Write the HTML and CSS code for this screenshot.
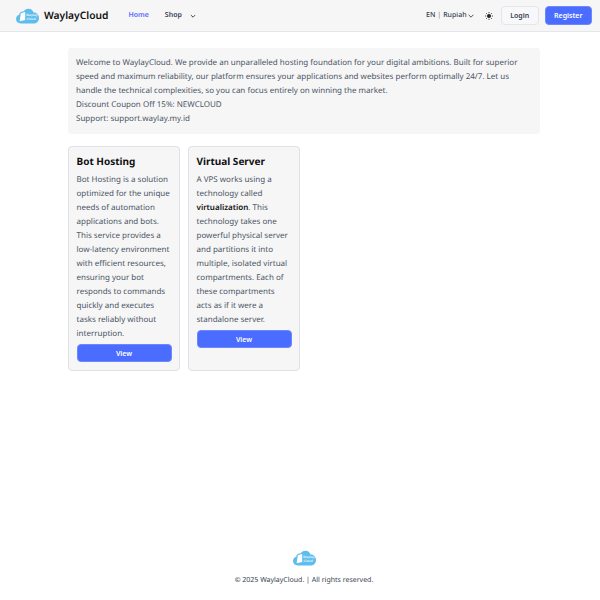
FILE: index.html
```html
<!DOCTYPE html>
<html lang="en">
<head>
<title>WaylayCloud</title>
<link rel="stylesheet" href="styles.css">
</head>
<body>
<header class="topbar">
    <div class="topbar-left">
        <a class="brand" href="#">
            <svg class="cloud" viewBox="0 0 24 16" width="23" height="16">
                <path fill="#5fbdee" d="M5 15.800C2 15.800 0 13.800 0 11.200 0 8.900 1.500 7.200 3.300 6.800 3.400 4.500 5.400 3 7.700 3.400 9 1.200 11.200.2 13.400.4c2.300.2 4.100 1.600 4.800 3.700C21.400 4.400 24 6.800 24 10c0 3.300-2.500 5.800-5.800 5.800z"/>
                <path fill="#fff" d="M5 5.200 9.600 3.800v8.500L3.800 13.600z"/>
                <text class="logo-text" x="10.400" y="8.200">Waylay</text>
                <text class="logo-text" x="10.900" y="12">Cloud</text>
            </svg>
            <span class="brand-name">WaylayCloud</span>
        </a>
        <nav class="nav">
            <a class="nav-link active" href="#">Home</a>
            <a class="nav-link" href="#">Shop</a>
            <svg class="chev" viewBox="0 0 10 10" width="6" height="6"><path d="M1.500 3.500 5 7l3.500-3.500" fill="none" stroke="#333" stroke-width="1.500"/></svg>
        </nav>
    </div>
    <div class="topbar-right">
        <div class="locale">
            <span>EN</span><span class="sep">|</span><span>Rupiah</span>
            <svg class="chev-small" viewBox="0 0 10 10" width="6" height="6"><path d="M1 3 5 7l4-4" fill="none" stroke="#333" stroke-width="1.400"/></svg>
        </div>
        <svg class="sun" viewBox="0 0 16 16" width="8" height="8">
            <circle cx="8" cy="8" r="4" fill="#222"/>
            <path d="M8 0v2.500M8 13.500V16M0 8h2.500M13.500 8H16M2.300 2.300 4 4M12 12l1.700 1.700M2.300 13.700 4 12M12 4l1.700-1.700" stroke="#222" stroke-width="1.500"/>
        </svg>
        <button class="btn btn-outline">Login</button>
        <button class="btn btn-primary">Register</button>
    </div>
</header>

<main class="content">
    <section class="intro">
        <p>Welcome to WaylayCloud. We provide an unparalleled hosting foundation for your digital ambitions. Built for superior speed and maximum reliability, our platform ensures your applications and websites perform optimally 24/7. Let us handle the technical complexities, so you can focus entirely on winning the market.</p>
        <p>Discount Coupon Off 15%: NEWCLOUD</p>
        <p>Support: support.waylay.my.id</p>
    </section>

    <section class="cards">
        <div class="card">
            <h2>Bot Hosting</h2>
            <p>Bot Hosting is a solution optimized for the unique needs of automation applications and bots. This service provides a low-latency environment with efficient resources, ensuring your bot responds to commands quickly and executes tasks reliably without interruption.</p>
            <button class="btn btn-primary btn-block">View</button>
        </div>
        <div class="card">
            <h2>Virtual Server</h2>
            <p>A VPS works using a technology called <strong>virtualization</strong>. This technology takes one powerful physical server and partitions it into multiple, isolated virtual compartments. Each of these compartments acts as if it were a standalone server.</p>
            <button class="btn btn-primary btn-block">View</button>
        </div>
    </section>
</main>

<footer class="footer">
    <svg class="cloud" viewBox="0 0 24 16" width="23" height="16">
        <path fill="#5fbdee" d="M5 15.800C2 15.800 0 13.800 0 11.200 0 8.900 1.500 7.200 3.300 6.800 3.400 4.500 5.400 3 7.700 3.400 9 1.200 11.200.2 13.400.4c2.300.2 4.100 1.600 4.800 3.700C21.400 4.400 24 6.800 24 10c0 3.300-2.500 5.800-5.800 5.800z"/>
        <path fill="#fff" d="M5 5.200 9.600 3.800v8.500L3.800 13.600z"/>
        <text class="logo-text" x="10.400" y="8.200">Waylay</text>
        <text class="logo-text" x="10.900" y="12">Cloud</text>
    </svg>
    <p>© 2025 WaylayCloud. | All rights reserved.</p>
</footer>
</body>
</html>
```

FILE: styles.css
```css
* {
    box-sizing: border-box;
}

body {
    font-family: "Noto Sans", sans-serif;
    font-size: 8px;
    line-height: 14px;
    color: #4b5563;
    background-color: #fff;
    margin: 0;
    height: 600px;
    display: flex;
    flex-direction: column;
    text-rendering: geometricPrecision;
}

.topbar {
    height: 32px;
    flex: none;
    display: flex;
    align-items: center;
    justify-content: space-between;
    padding: 0 8px 0 16px;
    background-color: #f6f6f7;
    border-bottom: 1px solid #e5e6ec;
}

.topbar-left, .topbar-right, .nav, .brand, .locale {
    display: flex;
    align-items: center;
}

.brand {
    gap: 5px;
    text-decoration: none;
}

.brand-name {
    font-size: 10.250px;
    font-weight: 600;
    color: #111;
}

.logo-text {
    font-size: 3.400px;
    font-weight: 700;
    fill: #dff3fc;
}

.nav {
    margin-left: 20px;
}

.nav-link {
    font-size: 7px;
    font-weight: 600;
    text-decoration: none;
    color: #374151;
    margin-right: 8px;
}

.nav-link.active {
    color: #5a6cff;
    margin-right: 16px;
}

.locale {
    font-size: 7px;
    font-weight: 500;
    color: #374151;
}

.sep {
    margin: 0 2px;
    color: #888;
}

.chev-small {
    margin-left: 1px;
}

.sun {
    margin: 0 8px 0 11px;
}

.btn {
    font-family: inherit;
    font-size: 7px;
    font-weight: 600;
    height: 19px;
    padding: 0 8.500px;
    border-radius: 4px;
    cursor: pointer;
}

.btn-outline {
    background-color: #f8f8fa;
    border: 1px solid #e5e6ec;
    color: #374151;
    margin-right: 6px;
}

.btn-primary {
    background-color: #4a6cff;
    border: 1px solid #6d87ff;
    color: #fff;
}

.btn-block {
    display: block;
    width: 100%;
    height: 18px;
}

.content {
    width: 472px;
    margin: 16px 60px 0 68px;
    flex: 1;
}

.intro {
    background-color: #f6f6f7;
    border-radius: 3px;
    padding: 8px;
    margin-bottom: 12px;
}

.intro p {
    margin: 0;
}

.cards {
    display: flex;
    gap: 8px;
    align-items: stretch;
}

.card {
    width: 112px;
    background-color: #f6f6f7;
    border: 1px solid #e0e1e8;
    border-radius: 4px;
    padding: 6px 7.500px 8px;
}

.card h2 {
    font-size: 10px;
    font-weight: 700;
    line-height: 16px;
    color: #111;
    margin: 0 0 4px;
}

.card p {
    margin: 0 0 3px;
}

.card strong {
    font-weight: 600;
    color: #111;
}

.footer {
    flex: none;
    display: flex;
    flex-direction: column;
    align-items: center;
    padding: 0 0 12px 8px;
}

.footer p {
    margin: 8px 0 0;
    font-size: 7px;
    color: #374151;
}
```
